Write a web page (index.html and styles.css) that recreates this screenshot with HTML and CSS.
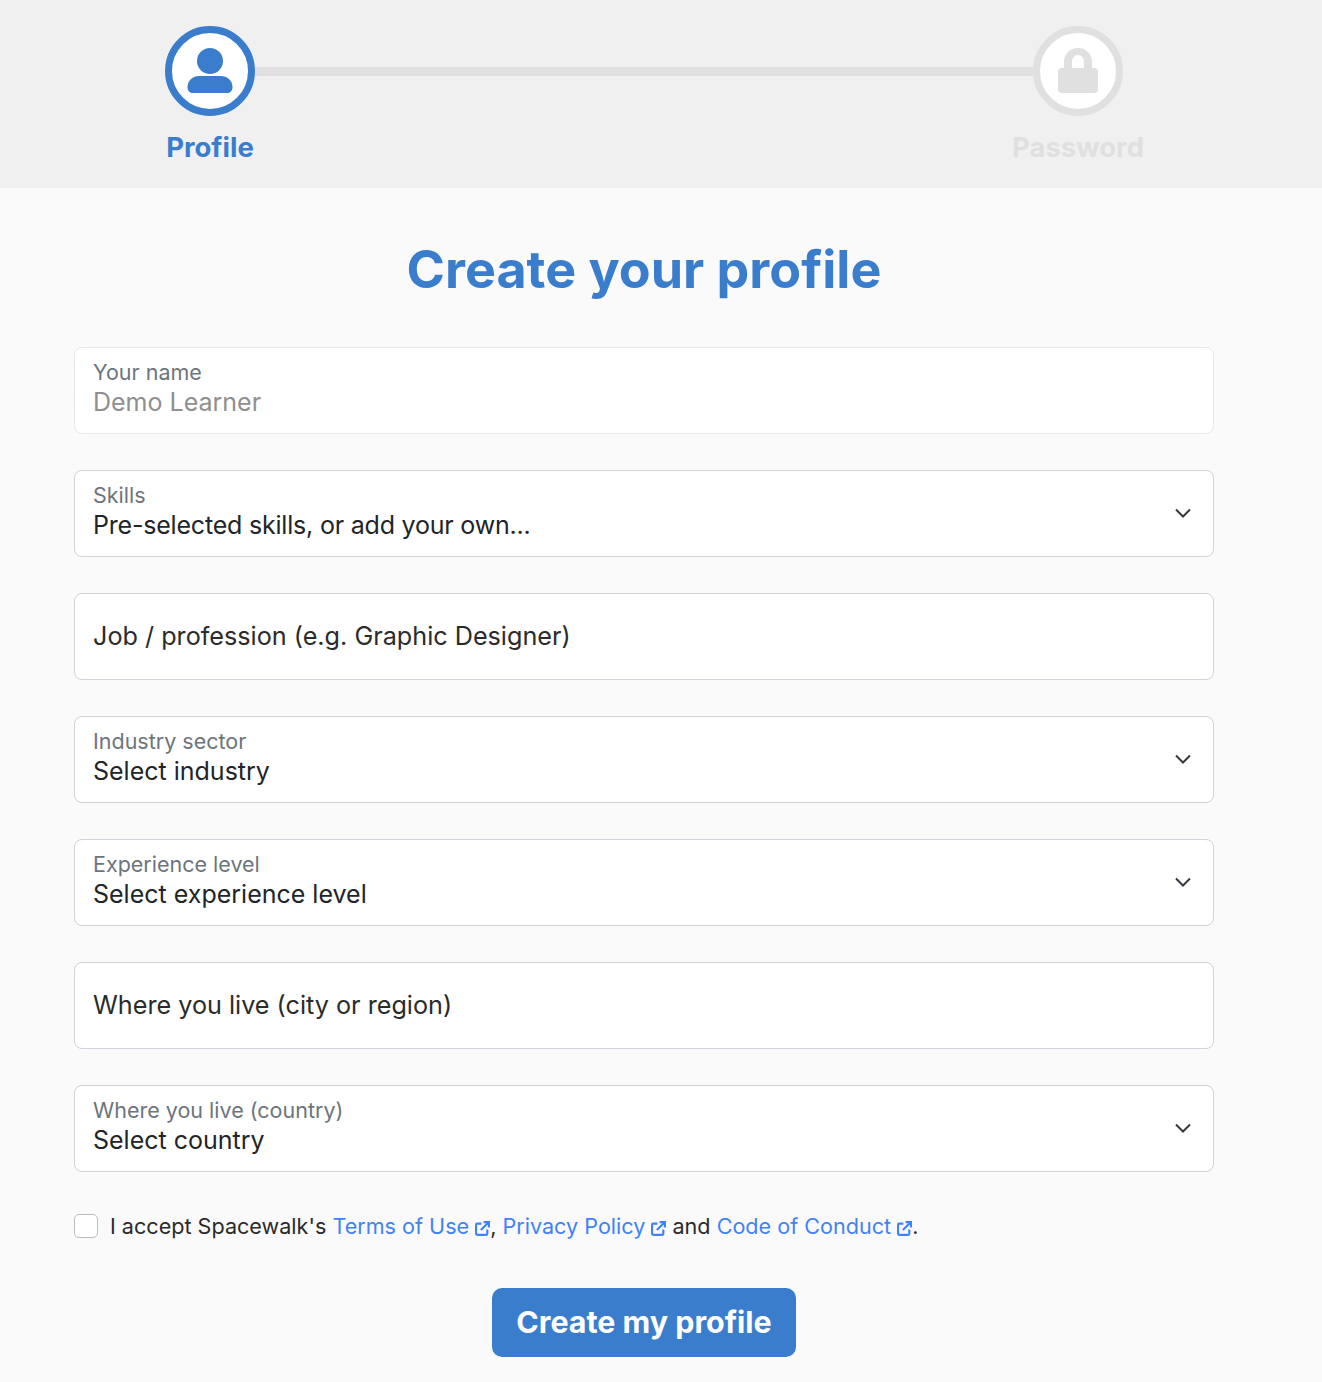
FILE: index.html
```html
<!DOCTYPE html>
<html lang="en">
<head>
    <meta charset="UTF-8">
    <meta name="viewport" content="width=device-width, initial-scale=1.0">
    <title>Create your profile</title>
    <link rel="stylesheet" href="styles.css">
</head>
<body>
    <header class="steps-bar">
        <div class="steps">
            <div class="step step-active">
                <div class="step-circle">
                    <svg width="46" height="46" viewBox="0 0 46 46"><circle cx="23" cy="13" r="13"/><path d="M12 28h22c6 0 11.500 4.500 11.500 11 0 3.500-2 6-5 6H5.500c-3 0-5-2.500-5-6C.5 32.500 6 28 12 28z"/></svg>
                </div>
                <span class="step-label">Profile</span>
            </div>
            <div class="step-line"></div>
            <div class="step step-off">
                <div class="step-circle">
                    <svg width="40" height="46" viewBox="0 0 40 46"><path fill-rule="evenodd" d="M6 20v-6C6 6 12 0 20 0s14 6 14 14v6h2.500c2 0 3.500 1.500 3.500 3.500v18c0 2-1.500 3.500-3.500 3.500h-33C1.500 45 0 43.500 0 41.500v-18C0 21.500 1.500 20 3.500 20H6zm8 0h12v-6c0-4-2.500-7-6-7s-6 3-6 7v6z"/></svg>
                </div>
                <span class="step-label">Password</span>
            </div>
        </div>
    </header>

    <main class="page">
        <h1 class="title">Create your profile</h1>
        <form class="profile-form">
            <div class="field field-disabled">
                <span class="field-label">Your name</span>
                <span class="field-value">Demo Learner</span>
            </div>
            <div class="field">
                <span class="field-label">Skills</span>
                <span class="field-value field-value-tight">Pre-selected skills, or add your own...</span>
                <svg class="chevron" width="16" height="10" viewBox="0 0 16 10"><path d="M1 1.500l7 7 7-7"/></svg>
            </div>
            <div class="field field-plain">
                <span class="field-value">Job / profession (e.g. Graphic Designer)</span>
            </div>
            <div class="field">
                <span class="field-label">Industry sector</span>
                <span class="field-value">Select industry</span>
                <svg class="chevron" width="16" height="10" viewBox="0 0 16 10"><path d="M1 1.500l7 7 7-7"/></svg>
            </div>
            <div class="field">
                <span class="field-label">Experience level</span>
                <span class="field-value">Select experience level</span>
                <svg class="chevron" width="16" height="10" viewBox="0 0 16 10"><path d="M1 1.500l7 7 7-7"/></svg>
            </div>
            <div class="field field-plain">
                <span class="field-value">Where you live (city or region)</span>
            </div>
            <div class="field">
                <span class="field-label">Where you live (country)</span>
                <span class="field-value">Select country</span>
                <svg class="chevron" width="16" height="10" viewBox="0 0 16 10"><path d="M1 1.500l7 7 7-7"/></svg>
            </div>

            <div class="accept">
                <span class="checkbox"></span>
                <p class="accept-text">I accept Spacewalk's <a href="#">Terms of Use<svg class="ext" width="15" height="15" viewBox="0 0 14 14"><path d="M6 2.500H2a1 1 0 0 0-1 1V12a1 1 0 0 0 1 1h8.500a1 1 0 0 0 1-1V8M8 1h5v5M13 1L5.500 8.500"/></svg></a>, <a href="#">Privacy Policy<svg class="ext" width="15" height="15" viewBox="0 0 14 14"><path d="M6 2.500H2a1 1 0 0 0-1 1V12a1 1 0 0 0 1 1h8.500a1 1 0 0 0 1-1V8M8 1h5v5M13 1L5.500 8.500"/></svg></a> and <a href="#">Code of Conduct<svg class="ext" width="15" height="15" viewBox="0 0 14 14"><path d="M6 2.500H2a1 1 0 0 0-1 1V12a1 1 0 0 0 1 1h8.500a1 1 0 0 0 1-1V8M8 1h5v5M13 1L5.500 8.500"/></svg></a>.</p>
            </div>

            <div class="actions">
                <button type="button" class="submit-btn">Create my profile</button>
            </div>
        </form>
    </main>
</body>
</html>
```

FILE: styles.css
```css
:root {
    --blue: #3b7dcd;
    --link: #3f83f8;
    --off: #e0e0e0;
    --text: #212529;
    --border: #ced4da;
}

* {
    box-sizing: border-box;
}

body {
    margin: 0;
    min-height: 1382px;
    background-color: #fafafa;
    color: var(--text);
    font-family: Inter, "Noto Sans", Arial, sans-serif;
}

.steps-bar {
    height: 188px;
    padding: 26px 34px 0 0;
    background-color: #f0f0f0;
}

.steps {
    display: flex;
    width: 958px;
    margin: 0 auto;
}

.step {
    display: flex;
    flex-direction: column;
    align-items: center;
    width: 90px;
}

.step-circle {
    display: flex;
    align-items: center;
    justify-content: center;
    width: 90px;
    height: 90px;
    border: 7px solid;
    border-radius: 50%;
    background-color: white;
}

.step-label {
    margin-top: 13px;
    font-size: 27.500px;
    line-height: 36px;
    font-weight: 700;
    white-space: nowrap;
}

.step-active {
    color: var(--blue);
}

.step-off {
    color: var(--off);
}

.step-circle svg {
    fill: currentColor;
}

.step-line {
    flex: 1;
    height: 9px;
    margin-top: 41px;
    background-color: var(--off);
}

.page {
    padding-right: 34px;
}

.title {
    margin: 0;
    padding-top: 49px;
    color: var(--blue);
    font-size: 52px;
    line-height: 66px;
    font-weight: 700;
    text-align: center;
}

.profile-form {
    display: flex;
    flex-direction: column;
    gap: 36px;
    width: 1140px;
    margin: 44px auto 0;
}

.field {
    position: relative;
    display: flex;
    flex-direction: column;
    height: 87px;
    padding: 11px 18px 0;
    border: 1px solid var(--border);
    border-radius: 8px;
    background-color: white;
}

.field-label {
    color: #6c757d;
    font-size: 21.500px;
    line-height: 26px;
}

.field-value {
    margin-top: 2px;
    font-size: 25px;
    line-height: 30px;
}

.field-value-tight {
    letter-spacing: -0.2px;
}

.field-plain {
    justify-content: center;
    padding-top: 0;
    padding-bottom: 4px;
}

.field-plain .field-value {
    font-size: 25.200px;
    color: #2b2b2b;
}

.field-disabled {
    border-color: #e6e8ea;
}

.field-disabled .field-value {
    color: #8f8f8f;
}

.chevron {
    position: absolute;
    top: 37px;
    right: 22px;
    fill: none;
    stroke: #343a40;
    stroke-width: 2;
}

.accept {
    display: flex;
    align-items: center;
    gap: 12px;
    margin-top: 3px;
}

.checkbox {
    width: 24px;
    height: 24px;
    border: 1px solid #bdbdbd;
    border-radius: 5px;
    background-color: white;
}

.accept-text {
    margin: 0;
    font-size: 21.600px;
    line-height: 30px;
    color: #2b2b2b;
}

.accept-text a {
    color: var(--link);
    text-decoration: none;
}

.ext {
    margin-left: 6px;
    vertical-align: -2px;
    fill: none;
    stroke: var(--link);
    stroke-width: 2;
}

.actions {
    display: flex;
    justify-content: center;
    margin-top: 11px;
}

.submit-btn {
    width: 304px;
    height: 69px;
    padding-bottom: 2px;
    border: none;
    border-radius: 10px;
    background-color: var(--blue);
    color: white;
    font-family: inherit;
    font-size: 30.400px;
    font-weight: 700;
}
```
